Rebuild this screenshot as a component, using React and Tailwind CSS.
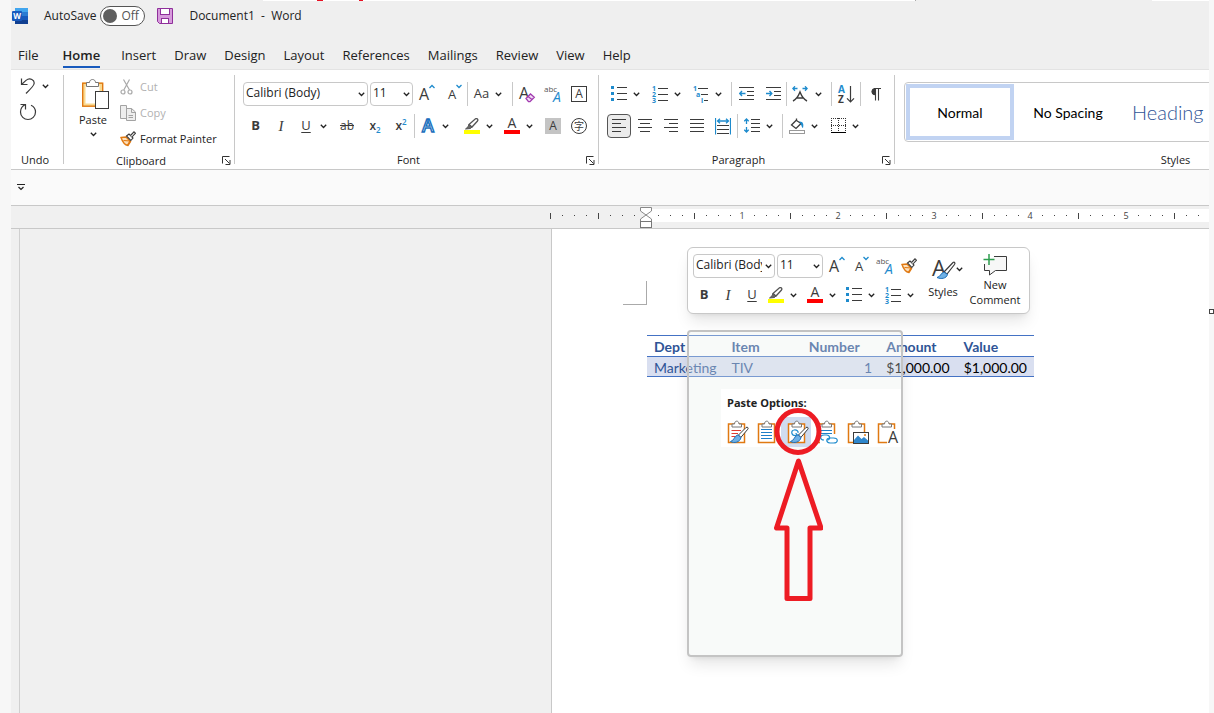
import { useState } from "react";

const tabs = [
  "File",
  "Home",
  "Insert",
  "Draw",
  "Design",
  "Layout",
  "References",
  "Mailings",
  "Review",
  "View",
  "Help",
];

const dark = "#3b3b3b";
const blue = "#1e8bcd";

function Btn({ label, className = "w-6", children }) {
  return (
    <button
      type="button"
      aria-label={label}
      className={`flex h-6 shrink-0 items-center justify-center text-[#3b3b3b] ${className}`}
    >
      {children}
    </button>
  );
}

function Chevron() {
  return (
    <svg width="7" height="5" viewBox="0 0 7 5" fill="none">
      <path d="M0.8 0.8L3.5 3.5L6.2 0.8" stroke="#222" strokeWidth="1.3" />
    </svg>
  );
}

function More({ label, className = "w-[15px]" }) {
  return (
    <button
      type="button"
      aria-label={label}
      className={`flex h-6 shrink-0 items-center justify-start pt-px pl-0.5 ${className}`}
    >
      <Chevron />
    </button>
  );
}

function Divider() {
  return <div className="h-6 w-px shrink-0 bg-[#c8c8c8]" />;
}

function Combo({ label, value, options, className }) {
  const [v, setV] = useState(value);
  return (
    <div className={`relative h-6 shrink-0 ${className}`}>
      <select
        aria-label={label}
        value={v}
        onChange={(e) => setV(e.target.value)}
        className="block h-6 w-full appearance-none overflow-hidden rounded border border-[#c8c8c8] bg-white pr-3 pb-0.5 pl-0.5 text-[12px] text-[#222]"
      >
        {options.map((o) => (
          <option key={o}>{o}</option>
        ))}
      </select>
      <span className="pointer-events-none absolute top-2.5 right-[3px] flex">
        <Chevron />
      </span>
    </div>
  );
}

const fonts = ["Calibri (Body)", "Arial", "Cambria"];
const sizes = ["8", "9", "10", "11", "12", "14"];

function WordLogo() {
  return (
    <svg width="16" height="16" viewBox="0 0 16 16" className="overflow-visible">
      <rect x="3" y="0" width="13" height="4" fill="#41a5ee" />
      <rect x="3" y="4" width="13" height="4" fill="#2b7cd3" />
      <rect x="3" y="8" width="13" height="4" fill="#185abd" />
      <rect x="3" y="12" width="13" height="4" fill="#103f91" />
      <rect x="0" y="3" width="10" height="10" rx="1" fill="#185abd" />
      <text x="5" y="11" fontSize="8" fontWeight="700" textAnchor="middle" fill="#fff">
        W
      </text>
    </svg>
  );
}

function SaveIcon() {
  return (
    <svg width="16" height="16" viewBox="0 0 16 16">
      <path
        d="M0.5 0.5H15.5V15.5H2.5L0.5 13.5Z"
        fill="#d79bdc"
        stroke="#8f2f9b"
      />
      <rect x="3.5" y="0.5" width="9" height="6" fill="#fff" stroke="#8f2f9b" />
      <rect x="4.5" y="10.5" width="7" height="5" fill="#fff" stroke="#8f2f9b" />
    </svg>
  );
}

function UndoIcon() {
  return (
    <svg width="16" height="17" viewBox="0 0 16 17" fill="none" stroke={dark} strokeWidth="1.2">
      <path d="M1.5 0.5V6.5H7.5" />
      <path d="M1.5 6.5L6 2.4C10 -0.8 15 2 14 6C13.6 8 12 9.5 6 15.5" />
    </svg>
  );
}

function RedoIcon() {
  return (
    <svg width="18" height="18" viewBox="0 0 18 18" fill="none" stroke={dark} strokeWidth="1.2">
      <path d="M1.5 1.5H6.5V6.5" />
      <path d="M6.5 1.5C3 3 1.5 6 1.5 9C1.5 13.5 5 16.5 9 16.5C13 16.5 16.5 13.5 16.5 9C16.5 6 15 3.5 12 2.2" />
    </svg>
  );
}

function PasteIcon() {
  return (
    <svg width="28" height="31" viewBox="0 0 28 31">
      <rect x="2" y="5" width="17" height="21" fill="#fff" stroke="#f9d98f" strokeWidth="3" />
      <rect x="0.7" y="4.2" width="20" height="23" fill="none" stroke="#e07912" strokeWidth="1.4" />
      <path d="M4.5 7.5V3.5H7.5C7.5 -0.5 13.5 -0.5 13.5 3.5H16.5V7.5Z" fill="#fff" stroke="#777" />
      <rect x="13.5" y="12.5" width="13" height="17" fill="#fff" stroke={dark} />
    </svg>
  );
}

function CutIcon() {
  return (
    <svg width="14" height="16" viewBox="0 0 14 16" fill="none" stroke="#a9a9a9" strokeWidth="1.2">
      <path d="M3.5 0.5L9.5 11M9.5 0.5L3.8 11" />
      <circle cx="3" cy="13" r="2" />
      <circle cx="10" cy="13" r="2" />
    </svg>
  );
}

function CopyIcon() {
  return (
    <svg width="16" height="16" viewBox="0 0 16 16" fill="#eee" stroke="#a3a3a3">
      <path d="M0.5 0.5H6.5V13.5H0.5Z" />
      <path d="M6.5 3.5H11.5L15.5 7V15.5H6.5Z" />
      <path d="M11.5 3.5V7.5H15.5M8.5 10.5H13M8.5 12.5H13" fill="none" />
    </svg>
  );
}

function BrushIcon() {
  return (
    <svg width="16" height="16" viewBox="0 0 16 16" fill="none">
      <path
        d="M1 6.5L6 6L10.5 10.5L8 14.5C5 14 2.5 11 1 6.5Z"
        fill="#fde0bb"
        stroke="#e07912"
        strokeWidth="1.4"
      />
      <path d="M3.5 9.5L10 10L7.5 14" stroke="#e07912" strokeWidth="1.2" />
      <path d="M6.5 5L9 3L13 7L10.8 9.5Z" fill="#fff" stroke={dark} strokeWidth="1.1" />
      <path d="M10.5 4.5L14 0.8L15.5 2.2L12 6" fill="#fff" stroke={dark} strokeWidth="1.1" />
    </svg>
  );
}

function Grow() {
  return (
    <span className="flex items-start">
      <span className="text-[16px] leading-5">A</span>
      <svg width="6" height="5" viewBox="0 0 6 5" fill="none">
        <path d="M0.5 4L3 1.5L5.5 4" stroke={blue} strokeWidth="1.3" />
      </svg>
    </span>
  );
}

function Shrink() {
  return (
    <span className="flex items-start pl-0.5">
      <span className="text-[13px] leading-5">A</span>
      <svg width="6" height="5" viewBox="0 0 6 5" fill="none">
        <path d="M0.5 1L3 3.5L5.5 1" stroke={blue} strokeWidth="1.3" />
      </svg>
    </span>
  );
}

function ClearIcon() {
  return (
    <svg width="16" height="17" viewBox="0 0 16 17" fill="none" className="overflow-visible">
      <text x="0" y="13" fontSize="16" fill={dark}>
        A
      </text>
      <path d="M7 12.5L11.5 8L15.3 11.2L11 15.7H9.5Z" fill="#f1dcf4" stroke="#a23bb0" strokeWidth="1.3" />
      <path d="M9 10.5L13 13.5" stroke="#a23bb0" strokeWidth="1.2" />
    </svg>
  );
}

function AbcIcon() {
  return (
    <svg width="18" height="17" viewBox="0 0 18 17" className="overflow-visible">
      <text x="0" y="6" fontSize="8" fill="#555">
        abc
      </text>
      <text x="9" y="16" fontSize="14" fontStyle="italic" fill={blue}>
        A
      </text>
    </svg>
  );
}

function Highlight() {
  return (
    <svg width="16" height="16" viewBox="0 0 16 16" fill="none">
      <path d="M5 6.5L11.5 0.8C13 0 14.5 1.5 13.5 3L8 9Z" fill="#fff" stroke="#555" strokeWidth="1.3" />
      <path d="M5 6.5L8 9L6.5 10.5L1.5 11L4 8.8Z" fill="#666" stroke="#555" />
      <rect y="12" width="16" height="4" fill="#ff0" />
    </svg>
  );
}

function FontColor() {
  return (
    <svg width="16" height="16" viewBox="0 0 16 16" fill="none" className="overflow-visible">
      <text x="8" y="10" fontSize="14" textAnchor="middle" fill={dark}>
        A
      </text>
      <rect y="12" width="16" height="4" fill="#f00" />
    </svg>
  );
}

function Bullets() {
  return (
    <svg width="16" height="16" viewBox="0 0 16 16">
      <path d="M0 0h3v3h-3zM0 6h3v3h-3zM0 12h3v3h-3z" fill={blue} />
      <path d="M6 1.5H16M6 7.5H16M6 13.5H16" stroke={dark} />
    </svg>
  );
}

function Numbering() {
  return (
    <svg width="16" height="17" viewBox="0 0 16 17" className="overflow-visible">
      <g fontSize="7" fontWeight="700" fill={blue}>
        <text x="0" y="5">
          1
        </text>
        <text x="0" y="11">
          2
        </text>
        <text x="0" y="17">
          3
        </text>
      </g>
      <path d="M6 2.5H16M6 8.5H16M6 14.5H16" stroke={dark} />
    </svg>
  );
}

function Multilevel() {
  return (
    <svg width="16" height="17" viewBox="0 0 16 17" fill="none" className="overflow-visible">
      <path d="M5 2.5H15M8 8.5H15M11 14.5H15" stroke={dark} />
      <g fontSize="7" fontWeight="700" fill={blue}>
        <text x="0" y="5">
          1
        </text>
        <text x="3" y="11">
          a
        </text>
        <text x="8" y="17">
          i
        </text>
      </g>
    </svg>
  );
}

function Indent({ out }) {
  return (
    <svg width="15" height="14" viewBox="0 0 15 14" fill="none">
      <path d="M0 0.5H15M8 4.5H15M8 8.5H15M0 12.5H15" stroke={dark} />
      <path
        d={out ? "M6.5 6.5H0.8M3 4L0.8 6.5L3 9" : "M0 6.5H5.8M3.5 4L5.8 6.5L3.5 9"}
        stroke={blue}
        strokeWidth="1.4"
      />
    </svg>
  );
}

function AsianLayout() {
  return (
    <svg width="16" height="16" viewBox="0 0 16 16" fill="none">
      <path d="M1 15C4 13.5 6 11 8 6C10 11 12 13.5 15 15M5 12H11" stroke={dark} strokeWidth="1.4" />
      <path
        d="M5.5 2.5H0.8M3 0.3L0.8 2.5L3 4.7M10.5 2.5H15.2M13 0.3L15.2 2.5L13 4.7"
        stroke={blue}
        strokeWidth="1.3"
      />
    </svg>
  );
}

function SortIcon() {
  return (
    <svg width="17" height="17" viewBox="0 0 17 17" fill="none" className="overflow-visible">
      <g fontSize="10" fontWeight="700">
        <text x="0" y="7" fill={blue}>
          A
        </text>
        <text x="0" y="17" fill={dark}>
          Z
        </text>
      </g>
      <path d="M12.5 0V16M9 12.3L12.5 16L16 12.3" stroke={dark} strokeWidth="1.2" />
    </svg>
  );
}

function Pilcrow() {
  return (
    <svg width="11" height="13" viewBox="0 0 11 13" fill="none">
      <path d="M5 0.5A3 3 0 0 0 5 6.8Z" fill={dark} stroke={dark} />
      <path d="M4 0.5H11M5.5 0V12.5M8.5 0V12.5" stroke={dark} strokeWidth="1.1" />
    </svg>
  );
}

function Lines({ d }) {
  return (
    <svg width="14" height="14" viewBox="0 0 14 14">
      <path d={d} stroke={dark} />
    </svg>
  );
}

function Distribute() {
  return (
    <svg width="16" height="17" viewBox="0 0 16 17" fill="none">
      <path d="M0.5 0V16.5M15.5 0V16.5" stroke={blue} strokeWidth="1.2" />
      <path d="M2.5 3H13.5M5 0.8L2.5 3L5 5.2M11 0.8L13.5 3L11 5.2" stroke={blue} strokeWidth="1.3" />
      <path d="M2 7.5H14M2 11.5H14M2 15.5H14" stroke={dark} />
    </svg>
  );
}

function Spacing() {
  return (
    <svg width="16" height="16" viewBox="0 0 16 16" fill="none">
      <path d="M7 1.5H16M7 5.5H16M7 9.5H16M7 13.5H16" stroke={dark} />
      <path
        d="M2.5 1V6M2.5 9V14M0.3 3.2L2.5 1L4.7 3.2M0.3 11.8L2.5 14L4.7 11.8"
        stroke={blue}
        strokeWidth="1.3"
      />
    </svg>
  );
}

function Shading() {
  return (
    <svg width="16" height="16" viewBox="0 0 16 16" fill="none">
      <path d="M7.5 2L2.5 7L7 10.5L12 5.5L7.5 2.5V0.5" stroke={dark} strokeWidth="1.3" />
      <path d="M10 3.5C14 3 15 6 14 10C12.5 9.5 12.5 6 10 3.5Z" fill={blue} />
      <rect x="0.5" y="12.5" width="15" height="3" fill="#fff" stroke="#999" />
    </svg>
  );
}

function Borders() {
  return (
    <svg width="15" height="16" viewBox="0 0 15 16" fill="none">
      <path d="M0.5 0V14M14.5 0V14M0 0.5H15M7.5 0V14M0 7.5H15" stroke="#333" strokeDasharray="1 1" />
      <path d="M0 14.5H15" stroke="#000" />
    </svg>
  );
}

function Launcher({ label }) {
  return (
    <button type="button" aria-label={label} className="absolute right-[3px] bottom-1 flex">
      <svg width="9" height="9" viewBox="0 0 9 9" fill="none" stroke="#333">
        <path d="M0.5 7.5V0.5H7.5M3 3L7.5 7.5M8 4V8.5H3.5" />
      </svg>
    </button>
  );
}

function Group({ name, launcher, className = "", children }) {
  return (
    <section
      aria-label={name}
      className={`relative flex shrink-0 flex-col justify-between ${className}`}
    >
      {children}
      <div
        className={`text-center text-[11px] leading-[18px] text-[#222] ${launcher ? "pr-6" : ""}`}
      >
        {name}
      </div>
      {launcher && <Launcher label={`${name} settings`} />}
    </section>
  );
}

function GroupLine() {
  return <div className="my-[5px] w-px shrink-0 bg-[#c8c8c8]" />;
}

// sliver of the window behind, visible above the title bar
function TopEdge() {
  return (
    <div className="flex h-px shrink-0 pl-[252px]">
      <div className="w-[54px] bg-white" />
      <div className="w-1.5 bg-[#e81123]" />
      <div className="w-9 bg-white" />
      <div className="w-1 bg-[#e81123]" />
      <div className="w-[553px] border-r border-[#aaa] bg-white" />
      <div className="w-[236px]" />
      <div className="flex-1 bg-white" />
    </div>
  );
}

function TitleBar() {
  const [autoSave, setAutoSave] = useState(false);
  return (
    <header className="flex h-8 items-center pb-[3px] text-[12px] text-[#222]">
      <span className="pl-px">
        <WordLogo />
      </span>
      <label htmlFor="autosave" className="pl-4">
        AutoSave
      </label>
      <span className="relative ml-1 flex h-5 w-[45px] items-center rounded-full border border-[#555] bg-white">
        <input
          id="autosave"
          type="checkbox"
          role="switch"
          checked={autoSave}
          onChange={(e) => setAutoSave(e.target.checked)}
          className="absolute inset-0 appearance-none"
        />
        <span className="ml-0.5 size-3.5 rounded-full bg-[#5f5f5f]" />
        <span className="pl-1 text-[12px] text-[#555]">{autoSave ? "On" : "Off"}</span>
      </span>
      <button type="button" aria-label="Save" className="ml-3">
        <SaveIcon />
      </button>
      <span className="pl-4 whitespace-pre">Document1  -  Word</span>
    </header>
  );
}

function Tabs() {
  return (
    <nav className="flex h-[37px] items-center gap-[18px] border-b border-[#e3e3e3] pt-2 pl-[7px] text-[13px] text-[#222]">
      {tabs.map((t) => (
        <button
          key={t}
          type="button"
          className={
            t === "Home"
              ? "mr-[3px] ml-1.5 border-b-2 border-[#185abd] pt-0.5 leading-[22px] font-semibold"
              : "leading-[22px]"
          }
        >
          {t}
        </button>
      ))}
    </nav>
  );
}

function FontGroup() {
  return (
    <Group name="Font" launcher className="w-[363px] pt-3 pl-2">
      <div className="flex flex-col gap-2">
        <div className="flex items-center">
          <Combo label="Font" value={fonts[0]} options={fonts} className="mr-0.5 w-[125px]" />
          <Combo label="Font size" value="11" options={sizes} className="w-[43px]" />
          <Btn label="Increase font size" className="w-7"><Grow /></Btn>
          <Btn label="Decrease font size" className="w-[26px]"><Shrink /></Btn>
          <Divider />
          <Btn label="Change case" className="w-11 gap-1.5 pr-1 text-[13px]">
            Aa <Chevron />
          </Btn>
          <Divider />
          <Btn label="Clear formatting" className="w-7"><ClearIcon /></Btn>
          <Btn label="Phonetic guide"><AbcIcon /></Btn>
          <Btn label="Character border" className="w-7">
            <span className="size-4 border border-[#3b3b3b] text-[12px] leading-[14px]">A</span>
          </Btn>
        </div>
        <div className="flex items-center">
          <Btn label="Bold" className="w-[25px] text-[13px] font-bold">B</Btn>
          <Btn label="Italic" className="w-[26px] font-[Liberation_Serif,serif] text-[15px] italic">I</Btn>
          <Btn label="Underline" className="w-6 text-[13px] underline underline-offset-2">U</Btn>
          <More label="Underline style" className="w-3.5" />
          <Btn label="Strikethrough" className="w-[30px] text-[12px] line-through">ab</Btn>
          <Btn label="Subscript" className="w-[26px] text-[12px] font-semibold">
            x<span className="pt-2 text-[8px] text-[#1e8bcd]">2</span>
          </Btn>
          <Btn label="Superscript" className="w-[26px] text-[12px] font-semibold">
            x<span className="pb-2 text-[8px] text-[#1e8bcd]">2</span>
          </Btn>
          <Divider />
          <Btn label="Text effects" className="w-[25px]">
            <svg width="16" height="16" viewBox="0 0 16 16" className="overflow-visible">
              <text
                x="8"
                y="14"
                fontSize="18"
                fontWeight="600"
                textAnchor="middle"
                fill="#fff"
                stroke="#1a6fbd"
                strokeWidth="1.4"
              >
                A
              </text>
            </svg>
          </Btn>
          <More label="Text effects options" className="w-5" />
          <Btn label="Highlight"><Highlight /></Btn>
          <More label="Highlight colours" className="w-4" />
          <Btn label="Font colour"><FontColor /></Btn>
          <More label="Font colours" className="w-[17px]" />
          <Btn label="Character shading">
            <span className="size-4 bg-[#c4c4c4] text-[12px] leading-4">A</span>
          </Btn>
          <Btn label="Enclose characters" className="w-7">
            <span className="size-4 rounded-full border border-[#3b3b3b] font-['Noto_Sans_CJK_SC',sans-serif] text-[10px] leading-[13px]">
              字
            </span>
          </Btn>
        </div>
      </div>
    </Group>
  );
}

function ParagraphGroup() {
  return (
    <Group name="Paragraph" launcher className="w-[295px] pt-3 pl-2">
      <div className="flex flex-col gap-2">
        <div className="flex items-center">
          <Btn label="Bullets"><Bullets /></Btn>
          <More label="Bullet library" className="w-[17px]" />
          <Btn label="Numbering"><Numbering /></Btn>
          <More label="Numbering library" className="w-[17px]" />
          <Btn label="Multilevel list"><Multilevel /></Btn>
          <More label="List library" className="w-[18px]" />
          <Divider />
          <Btn label="Decrease indent" className="w-7"><Indent out /></Btn>
          <Btn label="Increase indent" className="w-[26px]"><Indent /></Btn>
          <Divider />
          <Btn label="Asian layout" className="w-[26px]"><AsianLayout /></Btn>
          <More label="Asian layout options" className="w-[18px]" />
          <Divider />
          <Btn label="Sort" className="w-7"><SortIcon /></Btn>
          <Divider />
          <Btn label="Show marks" className="w-7"><Pilcrow /></Btn>
        </div>
        <div className="flex items-center gap-0.5">
          <Btn label="Align left" className="w-6 rounded border border-[#555] bg-[#ebebeb]">
            <Lines d="M0 0.5H14M0 4.5H9M0 8.5H14M0 12.5H9" />
          </Btn>
          <Btn label="Center"><Lines d="M0 0.5H14M2 4.5H12M0 8.5H14M2 12.5H12" /></Btn>
          <Btn label="Align right"><Lines d="M0 0.5H14M5 4.5H14M0 8.5H14M5 12.5H14" /></Btn>
          <Btn label="Justify"><Lines d="M0 0.5H14M0 4.5H14M0 8.5H14M0 12.5H14" /></Btn>
          <Btn label="Distributed"><Distribute /></Btn>
          <Divider />
          <div className="flex">
            <Btn label="Line spacing"><Spacing /></Btn>
            <More label="Line spacing options" className="w-4" />
          </div>
          <Divider />
          <div className="flex">
            <Btn label="Shading"><Shading /></Btn>
            <More label="Shading colours" className="w-[17px]" />
            <Btn label="Borders"><Borders /></Btn>
            <More label="Border options" />
          </div>
        </div>
      </div>
    </Group>
  );
}

function Ribbon() {
  return (
    <div className="flex h-[100px] overflow-hidden border-b border-[#c8c8c8] bg-white">
      <Group name="Undo" className="w-[52px] pt-1 pr-1">
        <div className="flex flex-col pl-[5px]">
          <div className="flex">
            <Btn label="Undo" className="w-6"><UndoIcon /></Btn>
            <More label="Undo history" />
          </div>
          <Btn label="Redo" className="w-6 pt-1"><RedoIcon /></Btn>
        </div>
      </Group>
      <GroupLine />
      <Group name="Clipboard" launcher className="w-[170px] pt-1 pl-2">
        <div className="flex pl-[3px]">
          <button
            type="button"
            className="flex w-9 flex-col items-center pt-[5px] text-[11px] leading-5 text-[#222]"
          >
            <span className="pl-1.5">
              <PasteIcon />
            </span>
            Paste
            <span className="pt-0.5">
              <Chevron />
            </span>
          </button>
          <div className="flex flex-col pl-[9px] text-[11px] whitespace-nowrap text-[#222]">
            <button type="button" disabled className="flex h-[26px] items-center gap-1 text-[#b1b1b1]">
              <span className="w-4">
                <CutIcon />
              </span>
              Cut
            </button>
            <button type="button" disabled className="flex h-[26px] items-center gap-1 text-[#b1b1b1]">
              <CopyIcon />
              Copy
            </button>
            <button type="button" className="flex h-[26px] items-center gap-1">
              <BrushIcon />
              Format Painter
            </button>
          </div>
        </div>
      </Group>
      <GroupLine />
      <FontGroup />
      <GroupLine />
      <ParagraphGroup />
      <GroupLine />
      <div className="flex min-w-0 flex-1 overflow-hidden">
        <Group name="Styles" className="w-[552px] pt-3 pl-[9px]">
          <div className="flex h-[60px] items-stretch rounded border border-[#c8c8c8] p-px font-[Lato,sans-serif] text-[14px] text-black">
            <button type="button" className="w-[108px] border-4 border-[#c1d3f2]">
              Normal
            </button>
            <button type="button" className="w-[108px]">
              No Spacing
            </button>
            <button type="button" className="pl-2.5 text-[20px] font-light text-[#2f5496]">
              Heading
            </button>
          </div>
        </Group>
      </div>
    </div>
  );
}

function Ruler() {
  const cells = Array.from({ length: 56 }, (_, i) => i - 8);
  return (
    <div className="flex h-[23px] overflow-hidden border-b border-[#c8c8c8] bg-[#f0f0f0] pt-[3px] pl-[533px]">
      {cells.map((n) => (
        <div
          key={n}
          className={`relative flex h-[13px] w-3 shrink-0 items-center justify-center text-[9px] text-[#444] ${
            n > 0 ? "bg-white" : ""
          }`}
        >
          {n === 0 && (
            <svg width="12" height="22" viewBox="0 0 12 22" className="absolute -top-0.5 left-0">
              <path d="M6 2H12V15H6Z" fill="#fff" />
              <path d="M0.5 0.5H11.5V4L6 8L0.5 4Z" fill="#fff" stroke="#888" />
              <path d="M0.5 14.5V12L6 8L11.5 12V14.5Z" fill="#fff" stroke="#888" />
              <rect x="0.5" y="14.5" width="11" height="6" fill="#fff" stroke="#777" />
            </svg>
          )}
          {n !== 0 && n % 8 === 0 && n > 0 && n / 8}
          {n === -8 && <span className="h-1.5 w-px bg-[#444]" />}
          {n % 8 !== 0 && n % 4 === 0 && <span className="h-1.5 w-px bg-[#444]" />}
          {n % 4 !== 0 && <span className="size-px bg-[#444]" />}
        </div>
      ))}
    </div>
  );
}

function MiniToolbar() {
  return (
    <div className="absolute top-[18px] left-[135px] flex w-[343px] rounded-md border border-[#c8c8c8] bg-white px-1 py-1.5 shadow-lg">
      <div className="flex shrink-0 flex-col gap-[5px]">
        <div className="flex pl-px">
          <Combo label="Font" value={fonts[0]} options={fonts} className="mr-0.5 w-[82px]" />
          <Combo label="Font size" value="11" options={sizes} className="mr-0.5 w-[46px]" />
          <Btn label="Increase font size"><Grow /></Btn>
          <Btn label="Decrease font size"><Shrink /></Btn>
          <Btn label="Phonetic guide"><AbcIcon /></Btn>
          <Btn label="Format painter"><BrushIcon /></Btn>
        </div>
        <div className="flex">
          <Btn label="Bold" className="w-6 text-[13px] font-bold">B</Btn>
          <Btn label="Italic" className="w-6 font-[Liberation_Serif,serif] text-[15px] italic">I</Btn>
          <Btn label="Underline" className="w-6 text-[13px] underline underline-offset-2">U</Btn>
          <Btn label="Highlight"><Highlight /></Btn>
          <More label="Highlight colours" />
          <Btn label="Font colour"><FontColor /></Btn>
          <More label="Font colours" />
          <Btn label="Bullets"><Bullets /></Btn>
          <More label="Bullet library" />
          <Btn label="Numbering"><Numbering /></Btn>
          <More label="Numbering library" />
        </div>
      </div>
      <button type="button" className="flex w-11 flex-col items-center gap-1 pt-1 text-[11px] text-[#222]">
        <span className="flex items-center pl-2">
          <svg width="25" height="22" viewBox="0 0 25 22" fill="none" className="overflow-visible">
            <text x="1" y="18" fontSize="22" fill={dark}>
              A
            </text>
            <path d="M13 14L22 4.5C23.5 3.5 24.5 5 23.5 6.5L16 16Z" fill="#fff" stroke={dark} strokeWidth="1.2" />
            <path d="M13 14L16.5 16.5C15.5 20.5 10 21.5 6 19.5C9.5 19 9.5 15 13 14Z" fill="#6fb1e6" stroke="#1e6fb8" />
          </svg>
          <Chevron />
        </span>
        Styles
      </button>
      <button type="button" className="flex flex-1 flex-col items-center text-[11px] leading-[15px] text-[#222]">
        <svg width="24" height="22" viewBox="0 0 24 22" fill="none" className="mb-px">
          <path d="M11 2.5H23.5V16.5H12.5L6.5 21V16.5H1.5V10" fill="#f7f7f7" stroke={dark} />
          <path d="M6 0V11M0.5 5.5H11.5" stroke="#2e9e4f" strokeWidth="1.5" />
        </svg>
        <span>New</span>
        <span>Comment</span>
      </button>
    </div>
  );
}

function Clip({ children }) {
  return (
    <svg width="22" height="24" viewBox="0 0 22 24" fill="none" className="overflow-visible">
      <rect x="1.5" y="4" width="16" height="18.5" fill="#fff" stroke="#e07912" strokeWidth="1.5" />
      <path d="M5 7V4H7.5C7.5 0.2 12 0.2 12 4H14.5V7Z" fill="#fff" stroke="#777" />
      {children}
    </svg>
  );
}

function ClipBrush() {
  return (
    <>
      <path d="M11.5 15L19 7.5C20.5 6.5 21.8 8 20.8 9.2L13.8 17.5Z" fill="#fff" stroke={dark} />
      <path d="M11 14.8L14 17.5C13 22.5 7 23.5 3.5 21.5C7.5 20.5 7 16 11 14.8Z" fill="#6fb1e6" stroke="#1e6fb8" />
    </>
  );
}

function PasteMenu() {
  const options = [
    {
      label: "Keep Source Formatting",
      icon: (
        <>
          <path d="M4.5 10.5H14M4.5 13.5H11M4.5 16.5H8" stroke="#e03c31" strokeWidth="1.2" />
          <ClipBrush />
        </>
      ),
    },
    {
      label: "Use Destination Styles",
      icon: <path d="M4 9.5H15M4 12.5H15M4 15.5H15M4 18.5H15" stroke="#1e7fc8" />,
    },
    {
      label: "Link & Keep Source Formatting",
      icon: (
        <>
          <path
            d="M9 15.5C4 16 3.5 10.5 7 10C10 9.5 11.5 11.5 11 13M9 13C9 16 13 16 14 13.5"
            stroke={blue}
            strokeWidth="1.2"
          />
          <ClipBrush />
        </>
      ),
    },
    {
      label: "Link & Use Destination Styles",
      icon: (
        <>
          <path d="M4 10.5H15M4 13.5H15" stroke="#1e7fc8" />
          <rect x="3" y="14" width="19" height="10" fill="#fff" />
          <path
            d="M7 20C2.5 20 2.5 15 7 15H9.5C13.5 15 13.5 20 10.5 20"
            stroke={blue}
            strokeWidth="1.2"
          />
          <path
            d="M13 23C8.5 22.5 9 18 13 18H16.5C21.5 18 21.5 23 16.5 23Z"
            stroke={blue}
            strokeWidth="1.2"
          />
        </>
      ),
    },
    {
      label: "Picture",
      icon: (
        <>
          <rect x="6.5" y="12.5" width="15" height="11" fill="#fff" stroke={dark} />
          <path d="M7 20L11 15.5L14.5 19L17 17L21 20.5V23H7Z" fill="#2f86cc" />
          <circle cx="18" cy="15" r="1" fill="#e07912" />
        </>
      ),
    },
    {
      label: "Keep Text Only",
      icon: (
        <>
          <path d="M10 24V13L14 9H22V24Z" fill="#fff" />
          <text x="16" y="23" fontSize="16" textAnchor="middle" fill={dark}>
            A
          </text>
        </>
      ),
    },
  ];
  return (
    <div className="absolute top-[101px] left-[135px] h-[327px] w-[216px] rounded border-2 border-[#c4c4c4] bg-[#e8eeeb]/32 pt-[57px] pl-8 shadow-lg">
      <div className="h-[58px] bg-white">
        <div className="h-7 pl-1.5 text-[11px] leading-7 font-bold whitespace-nowrap text-[#222]">
          Paste Options:
        </div>
        <div className="flex">
          {options.map((o, i) => (
            <button
              key={o.label}
              type="button"
              aria-label={o.label}
              className={`flex h-[30px] w-[30px] items-center justify-center pl-1 ${
                i === 2 ? "bg-[#d0dcf0]" : ""
              }`}
            >
              <Clip>{o.icon}</Clip>
            </button>
          ))}
        </div>
      </div>
      <svg
        width="50"
        height="198"
        viewBox="0 0 50 198"
        fill="none"
        stroke="#ed1c24"
        strokeWidth="5"
        className="absolute top-[74px] left-[84px]"
      >
        <circle cx="25" cy="25.5" r="21" />
        <path d="M25.5 55L3.5 122H14V192.5H37V122H48Z" strokeLinejoin="round" />
      </svg>
    </div>
  );
}

function DocTable() {
  return (
    <table className="w-[387px] table-fixed border-collapse font-[Lato,sans-serif] text-[14px] leading-[18px] text-[#2f5496]">
      <thead>
        <tr className="border-y border-[#4472c4] text-left">
          <th className="pt-0.5 pl-[7px]">Dept</th>
          <th className="pt-0.5 pl-[7px]">Item</th>
          <th className="pt-0.5 pl-[7px]">Number</th>
          <th className="pt-0.5 pl-[7px]">Amount</th>
          <th className="pt-0.5 pl-[7px]">Value</th>
        </tr>
      </thead>
      <tbody className="leading-[17px]">
        <tr className="border-b border-[#4472c4] bg-[#d9dff0]">
          <td className="pt-0.5 pl-[7px]">Marketing</td>
          <td className="pt-0.5 pl-[7px]">TIV</td>
          <td className="pt-0.5 pr-[7px] text-right">1</td>
          <td className="pt-0.5 pr-[7px] text-right text-black">$1,000.00</td>
          <td className="pt-0.5 pr-[7px] text-right text-black">$1,000.00</td>
        </tr>
      </tbody>
    </table>
  );
}

export default function App() {
  return (
    <div className="flex min-h-screen bg-[#f7f7f7] font-['Open_Sans',sans-serif]">
      <div className="w-[11px] shrink-0" />
      <div className="flex min-w-0 flex-1 flex-col bg-[#efefef]">
        <TopEdge />
        <TitleBar />
        <Tabs />
        <Ribbon />
        <div className="flex h-9 items-center border-b border-[#c8c8c8] bg-[#fafafa] pl-1.5">
          <button type="button" aria-label="Customize toolbar">
            <svg width="8" height="7" viewBox="0 0 8 7" fill="none" stroke="#222">
              <path d="M0 0.5H8M1.5 3L4 5.5L6.5 3" strokeWidth="1.2" />
            </svg>
          </button>
        </div>
        <Ruler />
        <main className="flex flex-1">
          <div className="w-[9px] shrink-0 border-r border-[#d0d0d0] bg-[#f0f0f0]" />
          <div className="w-[532px] shrink-0 border-r border-[#c8c8c8] bg-[#f0f0f0]" />
          <div className="relative flex-1 bg-white pt-[52px] pl-[71px]">
            <div className="size-6 border-r border-b border-[#aaa]" />
            <div className="pt-[30px] pl-6">
              <DocTable />
            </div>
            <PasteMenu />
            <MiniToolbar />
          </div>
        </main>
      </div>
      <div className="w-[5px] shrink-0 pt-[309px]">
        <div className="size-[5px] border border-[#444] bg-white" />
      </div>
    </div>
  );
}
